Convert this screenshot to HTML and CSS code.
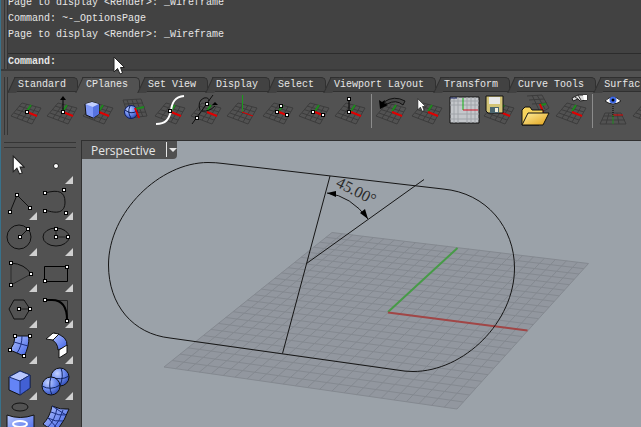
FILE: index.html
```
<!DOCTYPE html>
<html lang="en">
<head>
  <meta charset="UTF-8" />
  <title>Perspective</title>
  <link rel="stylesheet" href="styles.css">
</head>
<body>

<!-- shared icon parts -->
<svg class="defs" aria-hidden="true">
  <defs>
    <linearGradient id="blue" x1="0" y1="0" x2="1" y2="1">
      <stop offset="0" stop-color="#b9c8ff"/><stop offset="1" stop-color="#3c5fe6"/>
    </linearGradient>
    <radialGradient id="ball" cx="0.35" cy="0.3" r="0.8">
      <stop offset="0" stop-color="#c4d2ff"/><stop offset="0.5" stop-color="#6e8cf0"/><stop offset="1" stop-color="#2440a8"/>
    </radialGradient>
    <linearGradient id="gold" x1="0" y1="0" x2="1" y2="1">
      <stop offset="0" stop-color="#fff0a0"/><stop offset="1" stop-color="#e0a018"/>
    </linearGradient>
    <symbol id="mesh" viewBox="0 0 36 40">
      <path d="M13 11L32 16L23 32L2 24Z M10 14L30 20 M7 17.500L28 24 M5 21L25 28 M18 12L8 26 M23 13.500L13 28 M27 15L18 30" fill="none" stroke="#3c3c3c"/>
    </symbol>
    <symbol id="plane" viewBox="0 0 36 40">
      <use href="#mesh" width="36" height="40"/>
      <path d="M18 19L22 13" stroke="#1c8a1c" stroke-width="2"/>
      <path d="M18 20L28 24" stroke="#e00000" stroke-width="2"/>
    </symbol>
    <symbol id="dot" viewBox="0 0 4 4">
      <path d="M0 0h4v4h-4z" fill="#000"/><path d="M1 1h2v2h-2z" fill="#fff"/>
    </symbol>
    <symbol id="arrow" viewBox="0 0 12 19">
      <path d="M1 1V16L4.500 12.500L7 18L9.500 17L7.500 11.500H11.500Z" fill="#fff" stroke="#222"/>
    </symbol>
  </defs>
</svg>

<div class="app">
  <header class="top">
    <div class="grip"></div>
    <div class="console">
      <div class="history">
        <p>Page to display &lt;Render&gt;: _Wireframe</p>
        <p>Command: ~-_OptionsPage</p>
        <p>Page to display &lt;Render&gt;: _Wireframe</p>
      </div>
      <div class="prompt">
        <label for="command">Command:</label>
        <input id="command" type="text" autocomplete="off">
      </div>
    </div>
    <svg class="pointer" viewBox="0 0 12 19"><use href="#arrow"/></svg>
  </header>

  <section class="toolbar">
    <div class="grip"></div>
    <div class="toolbar-main">
      <nav class="tabs">
        <button class="tab">Standard</button>
        <button class="tab active">CPlanes</button>
        <button class="tab">Set View</button>
        <button class="tab">Display</button>
        <button class="tab">Select</button>
        <button class="tab">Viewport Layout</button>
        <button class="tab">Transform</button>
        <button class="tab">Curve Tools</button>
        <button class="tab">Surfac</button>
      </nav>
      <div class="icons">
        <button class="tool" aria-label="Set CPlane origin"><svg viewBox="0 0 36 40">
          <use href="#plane"/><use href="#dot" x="16" y="18" width="4" height="4"/></svg></button>
        <button class="tool" aria-label="Set CPlane elevation"><svg viewBox="0 0 36 40">
          <use href="#plane"/><path d="M18 20V6" stroke="#000"/><path d="M15 8L18 4L21 8Z"/><use href="#dot" x="16" y="18" width="4" height="4"/></svg></button>
        <button class="tool" aria-label="Set CPlane to object"><svg viewBox="0 0 36 40">
          <use href="#plane"/><path d="M4 12L11 10L18 12V22L12 26L5 23Z" fill="#7e98f8" stroke="#111"/><path d="M4 12L11 10L18 12L12 15Z" fill="#c3d0ff"/><path d="M12 15L18 12V22L12 26Z" fill="#5673e2"/></svg></button>
        <button class="tool" aria-label="Set CPlane to surface"><svg viewBox="0 0 36 40">
          <path d="M6 8L24 7L30 24L12 26Z M8 12L26 11 M9 17L28 15 M11 21L29 20 M10 8L17 26 M15 8L21 25 M19 7L26 25" fill="none" stroke="#3c3c3c"/>
          <circle cx="14" cy="20" r="6.500" fill="url(#ball)" stroke="#0c1c60"/><path d="M8 18Q14 23 20 19M13 14Q10 20 14 26" fill="none" stroke="#10235f"/>
          <path d="M18 17L27 15" stroke="#1c8a1c" stroke-width="2"/><path d="M18 16L22 26" stroke="#e00000" stroke-width="2"/></svg></button>
        <button class="tool" aria-label="Set CPlane perpendicular to curve"><svg viewBox="0 0 36 40">
          <use href="#plane"/><path d="M3 32C13 32 16 27 18 19C19 10 22 5 31 4" fill="none" stroke="#fff" stroke-width="2"/><use href="#dot" x="15" y="17" width="4" height="4"/></svg></button>
        <button class="tool" aria-label="Rotate CPlane"><svg viewBox="0 0 36 40">
          <use href="#plane"/><path d="M3 32L24 3M11 18Q8 9 15 6Q20 5 20 9M13 19Q20 20 26 14" fill="none" stroke="#111"/><path d="M23 13L26 10L29 13Z"/>
          <use href="#dot" x="6" y="24" width="4" height="4"/><use href="#dot" x="16" y="10" width="4" height="4"/></svg></button>
        <button class="tool" aria-label="Set CPlane vertical"><svg viewBox="0 0 36 40">
          <use href="#mesh"/><path d="M17.500 20V3" stroke="#1c9a1c"/><path d="M17 20L28 24" stroke="#e00000"/></svg></button>
        <button class="tool" aria-label="Set CPlane by 3 points"><svg viewBox="0 0 36 40">
          <use href="#plane"/><use href="#dot" x="14" y="18" width="4" height="4"/><use href="#dot" x="18" y="12" width="4" height="4"/><use href="#dot" x="24" y="21" width="4" height="4"/></svg></button>
        <button class="tool" aria-label="Set CPlane by X axis"><svg viewBox="0 0 36 40">
          <use href="#plane"/><use href="#dot" x="14" y="18" width="4" height="4"/><use href="#dot" x="24" y="21" width="4" height="4"/></svg></button>
        <button class="tool" aria-label="Set CPlane by Z axis"><svg viewBox="0 0 36 40">
          <use href="#plane"/><path d="M16 20V7" stroke="#000"/><use href="#dot" x="14" y="18" width="4" height="4"/><use href="#dot" x="14" y="5" width="4" height="4"/></svg></button>
        <span class="separator"></span>
        <button class="tool" aria-label="Previous CPlane"><svg viewBox="0 0 36 40">
          <use href="#plane"/><path d="M10 10Q20 3 31 9L29 13Q22 7 13 12Z" fill="#484848" stroke="#111"/><path d="M5 8L6 17L14 13L10 11L11 8L8 10Z"/></svg></button>
        <button class="tool" aria-label="Select CPlane"><svg viewBox="0 0 36 40">
          <use href="#plane"/><use href="#arrow" x="7" y="6" width="9" height="14"/></svg></button>
        <button class="tool" aria-label="CPlane grid"><svg viewBox="0 0 36 40">
          <path d="M4 5H33V31H4Z" fill="#c4c7cb" stroke="#111"/><path d="M8 5V31M12 5V31M21 5V31M25 5V31M29 5V31M4 9H33M4 13H33M4 22H33M4 27H33" stroke="#a0a4a9"/><path d="M17 6V18" stroke="#10b010"/><path d="M17 18H32" stroke="#d01020"/><path d="M4 6H11" stroke="#142060"/></svg></button>
        <button class="tool" aria-label="Save CPlane"><svg viewBox="0 0 36 40">
          <use href="#plane"/><path d="M4 4H21V21H6L4 19Z" fill="#d3c477" stroke="#111"/><path d="M7 5H18V12H7Z" fill="#e8e8e8"/><path d="M8 15H17V21H8Z" fill="#4b6670"/><path d="M13 16H16V20H13Z" fill="#f1efe0"/></svg></button>
        <button class="tool" aria-label="Read CPlane"><svg viewBox="0 0 36 40">
          <path d="M9 4L24 3L31 16L19 23M11 8L26 7M14 12L29 11M14 3L21 18M19 3L27 17" fill="none" stroke="#3c3c3c"/><path d="M22 13L28 12" stroke="#1c8a1c" stroke-width="2"/><path d="M22 12L25 20" stroke="#e00000" stroke-width="2"/>
          <path d="M4 33V18L7 15H12L14 18H25V23L21 33Z" fill="#f7d45c" stroke="#111"/><path d="M4 33L10 21H31L25 33Z" fill="url(#gold)" stroke="#111"/></svg></button>
        <button class="tool" aria-label="Edit CPlane"><svg viewBox="0 0 36 40">
          <use href="#plane"/><path d="M18 6L24 3H33V8L26 9L24 7L19 9Z" fill="#d8d8d8" stroke="#222"/><path d="M24 3L27 8M21 5L24 7" stroke="#333"/><path d="M29 3H33V8H30Z" fill="#fff"/></svg></button>
        <span class="separator"></span>
        <button class="tool" aria-label="Plan view"><svg viewBox="0 0 36 40">
          <path d="M10 21H26L31 32H5ZM9 24H28M7 28H30M14 21L11 32M22 21L24 32" fill="none" stroke="#3c3c3c"/>
          <path d="M10 9Q18 1 26 9Q18 15 10 9Z" fill="#fff" stroke="#222"/><circle cx="18" cy="8" r="3.500" fill="#3e69e5"/><circle cx="18" cy="8" r="1.500"/>
          <path d="M18 14V25" stroke="#000" stroke-dasharray="1 1"/><path d="M18 23H28" stroke="#e00000"/><path d="M18 23V32" stroke="#1c8a1c"/></svg></button>
        <button class="tool" aria-label="Synchronize CPlanes"><svg viewBox="0 0 36 40"><use href="#plane"/></svg></button>
      </div>
    </div>
  </section>

  <main class="work">
    <aside class="sidebar">
      <div class="palette">
        <button class="tool" aria-label="Select"><svg viewBox="0 0 36 36"><use href="#arrow" x="11" y="7" width="13" height="20"/></svg></button>
        <button class="tool more" aria-label="Point"><svg viewBox="0 0 36 36"><circle cx="19" cy="18" r="2.500" fill="#fff" stroke="#222"/></svg></button>
        <button class="tool more" aria-label="Polyline"><svg viewBox="0 0 36 36">
          <path d="M9 28L16 11L29 24" fill="none" stroke="#111"/><use href="#dot" x="7" y="26" width="4" height="4"/><use href="#dot" x="14" y="9" width="4" height="4"/><use href="#dot" x="27" y="22" width="4" height="4"/></svg></button>
        <button class="tool more" aria-label="Curve"><svg viewBox="0 0 36 36">
          <path d="M8 9C22 5 28 8 28 18C28 29 20 30 8 26" fill="none" stroke="#111"/><use href="#dot" x="6" y="7" width="4" height="4"/><use href="#dot" x="25" y="4" width="4" height="4"/><use href="#dot" x="6" y="25" width="4" height="4"/><use href="#dot" x="27" y="27" width="4" height="4"/></svg></button>
        <button class="tool more" aria-label="Circle"><svg viewBox="0 0 36 36">
          <circle cx="18" cy="17" r="12" fill="none" stroke="#111"/><path d="M19 17L27 9" stroke="#111"/><use href="#dot" x="17" y="15" width="4" height="4"/><use href="#dot" x="25" y="7" width="4" height="4"/></svg></button>
        <button class="tool more" aria-label="Ellipse"><svg viewBox="0 0 36 36">
          <ellipse cx="19" cy="17" rx="13" ry="9" fill="none" stroke="#111"/><path d="M19 9V17H31" fill="none" stroke="#222"/><use href="#dot" x="17" y="15" width="4" height="4"/><use href="#dot" x="17" y="7" width="4" height="4"/><use href="#dot" x="29" y="15" width="4" height="4"/></svg></button>
        <button class="tool more" aria-label="Arc"><svg viewBox="0 0 36 36">
          <path d="M10 7Q24 8 30 18" fill="none" stroke="#111"/><path d="M10 7V29L30 18" fill="none" stroke="#2c2c2c"/><use href="#dot" x="8" y="5" width="4" height="4"/><use href="#dot" x="8" y="27" width="4" height="4"/><use href="#dot" x="28" y="16" width="4" height="4"/></svg></button>
        <button class="tool more" aria-label="Rectangle"><svg viewBox="0 0 36 36">
          <path d="M7.500 10.500H30.500V25.500H7.500Z" fill="none" stroke="#000"/><use href="#dot" x="28" y="9" width="4" height="4"/><use href="#dot" x="6" y="23" width="4" height="4"/></svg></button>
        <button class="tool more" aria-label="Polygon"><svg viewBox="0 0 36 36">
          <path d="M13 8H23L29 17L23 27H13L8 17Z" fill="none" stroke="#111"/><path d="M18 17H28" stroke="#222"/><use href="#dot" x="16" y="15" width="4" height="4"/><use href="#dot" x="27" y="15" width="4" height="4"/></svg></button>
        <button class="tool more" aria-label="Fillet"><svg viewBox="0 0 36 36">
          <path d="M8 8.500H30.500V28" fill="none" stroke="#222"/><path d="M8 8H15Q30 8 30 28" fill="none" stroke="#000" stroke-width="2"/><use href="#dot" x="6" y="6" width="4" height="4"/><use href="#dot" x="28" y="27" width="4" height="4"/></svg></button>
        <button class="tool more" aria-label="Surface from points"><svg viewBox="0 0 36 36">
          <path d="M14 8L28 8Q28 20 23 28L9 22Q14 16 14 8Z" fill="url(#blue)" stroke="#111"/><path d="M21 8Q21 18 16 25M13 14L27 18" fill="none" stroke="#1b2f80"/><use href="#dot" x="12" y="6" width="4" height="4"/><use href="#dot" x="27" y="6" width="4" height="4"/><use href="#dot" x="7" y="20" width="4" height="4"/><use href="#dot" x="21" y="26" width="4" height="4"/></svg></button>
        <button class="tool more" aria-label="Blend surface"><svg viewBox="0 0 36 36">
          <path d="M17 5Q31 8 30 18L21 22Q21 15 14 11Z" fill="url(#blue)" stroke="#111"/><path d="M9 11L16 5L22 6L16 12Z" fill="#fff" stroke="#111"/><path d="M22 22L30 17V25L22 30Z" fill="#fff" stroke="#111"/></svg></button>
        <button class="tool more" aria-label="Box"><svg viewBox="0 0 36 36">
          <path d="M8 13L19 7L29 11V24L19 31L8 26Z" fill="#6484f6" stroke="#111"/><path d="M8 13L19 7L29 11L19 17Z" fill="#b7c6ff" stroke="#1b2f70"/><path d="M19 17L29 11V24L19 31Z" fill="#4260d4" stroke="#1b2f70"/></svg></button>
        <button class="tool more" aria-label="Boolean union"><svg viewBox="0 0 36 36">
          <circle cx="23" cy="13" r="9" fill="url(#ball)" stroke="#111"/><path d="M14 13Q24 17 32 12M24 4Q27 12 23 22" fill="none" stroke="#10235f"/><circle cx="14" cy="22" r="9" fill="url(#ball)" stroke="#111"/><path d="M5 22Q14 27 23 21M14 13Q11 22 15 31" fill="none" stroke="#10235f"/></svg></button>
        <button class="tool" aria-label="Project curves"><svg viewBox="0 0 36 36">
          <ellipse cx="19" cy="7" rx="8" ry="4" fill="none" stroke="#111"/><path d="M6 15Q19 20 33 15V36H6Z" fill="url(#blue)" stroke="#111"/><ellipse cx="19" cy="24" rx="7" ry="3" fill="none" stroke="#fff" stroke-width="2"/></svg></button>
        <button class="tool" aria-label="Surface edit"><svg viewBox="0 0 36 36">
          <path d="M15 6Q23 10 32 9Q28 20 21 29Q13 30 6 24Q13 17 15 6Z" fill="url(#blue)" stroke="#111"/><path d="M20 8Q18 20 11 27M26 10Q23 21 16 29M14 12Q22 16 29 15M11 18Q18 22 26 21M15 6L29 15M11 18L21 29" fill="none" stroke="#1b2f80"/></svg></button>
      </div>
    </aside>

    <section class="viewport">
      <svg class="scene" viewBox="82 141 559 286" preserveAspectRatio="xMinYMin slice">
        <path class="floor" d="M332 232.500L588.500 263.500L457 409L164 367Z"/>
        <path class="grid" id="grid"/>
        <path class="axis-y" d="M388 312L457.500 248"/>
        <path class="axis-x" d="M388 312.500L527.500 330.500"/>
        <g class="curve">
          <path d="M443 189L223 163.500Q216 162.500 208 162.500C160 162.500 108.500 212 108.500 265C108.500 305 133 334 170 338L397 370Q405 371.500 413 371.500C464 371.500 514.500 322 514.500 268C514.500 228 487 193 443 189Z"/>
          <path d="M330 176L282.500 353.500M424 179.500L306.500 263.500"/>
          <path d="M327 193Q351 196 368 219"/>
        </g>
        <path class="arrowhead" d="M327 193L336 191V197ZM368 219L360 213L365 209Z"/>
        <text class="angle" transform="translate(335 186) rotate(27)">45.00°</text>
      </svg>
      <div class="viewport-title">
        <button class="view-name">Perspective</button>
        <button class="view-menu" aria-label="Viewport menu"></button>
      </div>
    </section>
  </main>
</div>

<script src="grid.js"></script>
</body>
</html>
```

FILE: grid.js
```
// construction plane corners: back, right, front, left
const corners = [[332, 232.5], [588.5, 263.5], [457, 409], [164, 367]];
const cells = 24;

// maps the unit square onto the corners with perspective
function project(u, v) {
  const [[x0, y0], [x1, y1], [x2, y2], [x3, y3]] = corners;
  const dx1 = x1 - x2, dx2 = x3 - x2, sx = x0 - x1 + x2 - x3;
  const dy1 = y1 - y2, dy2 = y3 - y2, sy = y0 - y1 + y2 - y3;
  const det = dx1 * dy2 - dx2 * dy1;
  const g = (sx * dy2 - dx2 * sy) / det;
  const h = (dx1 * sy - sx * dy1) / det;
  const w = g * u + h * v + 1;
  const x = ((x1 - x0 + g * x1) * u + (x3 - x0 + h * x3) * v + x0) / w;
  const y = ((y1 - y0 + g * y1) * u + (y3 - y0 + h * y3) * v + y0) / w;
  return x.toFixed(1) + ' ' + y.toFixed(1);
}

let d = '';
for (let i = 0; i <= cells; i++) {
  const t = i / cells;
  d += `M${project(t, 0)}L${project(t, 1)}M${project(0, t)}L${project(1, t)}`;
}
document.getElementById('grid').setAttribute('d', d);
```

FILE: styles.css
```
* {
  box-sizing: border-box;
}
body {
  margin: 0;
  background: #525252;
  color: #e6e6e6;
  font-family: "Liberation Mono", monospace;
  font-size: 10px;
}
button {
  padding: 0;
  border: 0;
  background: none;
  color: inherit;
  font: inherit;
  white-space: nowrap;
}
.defs {
  position: absolute;
  width: 0;
  height: 0;
}
.app {
  display: flex;
  flex-direction: column;
  height: 100vh;
  overflow: hidden;
  border-left: 1px solid #38718a;
}
.grip {
  flex: none;
  width: 4px;
  margin: 0 0 0 3px;
  border: solid #353535;
  border-width: 0 1px;
}

/* command line */
.top {
  display: flex;
  position: relative;
  flex: none;
  border-bottom: 2px solid #3a3a3a;
}
.console {
  flex: 1;
  background: #424242;
}
.history {
  display: flex;
  flex-direction: column;
  justify-content: flex-end;
  height: 53px;
  padding-bottom: 10px;
  overflow: hidden;
}
.history p {
  flex: none;
  margin: 0;
  line-height: 16px;
}
.prompt {
  display: flex;
  align-items: center;
  height: 16px;
  border-top: 1px solid #2c2c2c;
  font-weight: bold;
}
.prompt input {
  flex: 1;
  min-width: 0;
  height: 14px;
  padding: 0 4px;
  border: 0;
  outline: 0;
  background: none;
  color: inherit;
  font: inherit;
}
.pointer {
  position: absolute;
  left: 112px;
  top: 56px;
  z-index: 2;
  width: 12px;
  height: 19px;
}

/* toolbar */
.toolbar {
  display: flex;
  flex: none;
  padding-top: 6px;
}
.toolbar .grip {
  height: 58px;
}
.toolbar-main {
  flex: 1;
  min-width: 0;
  overflow: hidden;
}
.tabs {
  display: flex;
}
.tab {
  position: relative;
  flex: none;
  height: 15px;
  padding: 0 10px;
  line-height: 15px;
  border-bottom: 1px solid #303030;
  z-index: 0;
}
.tab::before {
  content: "";
  position: absolute;
  inset: 0 -2px 0 6px;
  z-index: -1;
  border: 1px solid #303030;
  border-width: 1px 1px 0 0;
  border-radius: 0 5px 0 0;
  background: #424242;
}
.tab::after {
  content: "";
  position: absolute;
  left: 3px;
  top: 0;
  z-index: -1;
  width: 8px;
  height: 15px;
  border: 1px solid #303030;
  border-width: 1px 0 0 1px;
  background: #424242;
  transform: skewX(-25deg);
}
.tab.active {
  border-bottom-color: #525252;
}
.tab.active::before,
.tab.active::after {
  background: #525252;
}
.icons {
  display: flex;
  padding-left: 1px;
}
.tool {
  position: relative;
  flex: none;
  width: 36px;
}
.tool svg {
  display: block;
  width: 100%;
}
.separator {
  flex: none;
  width: 1px;
  height: 34px;
  margin: 2px 2px 0;
  background: #8c8c8c;
}

/* side palette */
.work {
  display: flex;
  flex: 1;
  min-height: 0;
  margin-top: 5px;
}
.sidebar {
  flex: none;
  width: 80px;
  padding: 2px 5px 0 0;
}
.sidebar::before {
  content: "";
  display: block;
  height: 4px;
  margin-left: 3px;
  border: solid #353535;
  border-width: 1px 0;
}
.palette {
  display: grid;
  grid-template-columns: 36px 36px;
}
.more::after {
  content: "";
  position: absolute;
  right: 0;
  bottom: 0;
  width: 8px;
  height: 8px;
  background: #cfcfcf;
  clip-path: polygon(100% 0, 100% 100%, 0 100%);
}

/* viewport */
.viewport {
  position: relative;
  flex: 1;
  min-width: 0;
  border: solid #303030;
  border-width: 1px 0 0 1px;
  background: #9ba2a9;
}
.scene {
  display: block;
  width: 100%;
  height: 100%;
}
.floor {
  fill: #92979f;
}
.grid {
  fill: none;
  stroke: #848990;
}
.axis-x {
  stroke: #a14646;
  stroke-width: 2;
}
.axis-y {
  stroke: #479b47;
  stroke-width: 2;
}
.curve {
  fill: none;
  stroke: #161616;
}
.arrowhead {
  fill: #000;
}
.angle {
  fill: #2c2c2c;
  font-family: "Liberation Serif", serif;
  font-size: 16px;
}
.viewport-title {
  display: flex;
  position: absolute;
  left: 0;
  top: 0;
  height: 18px;
  padding-left: 9px;
  border-radius: 0 0 4px 0;
  background: #505050;
  font-family: "Open Sans", sans-serif;
  font-size: 12px;
}
.view-name {
  padding-right: 11px;
  line-height: 17px;
}
.view-menu {
  width: 11px;
  height: 15px;
  margin-top: 1px;
  border-left: 1px solid #e6e6e6;
}
.view-menu::before {
  content: "";
  display: block;
  margin-left: 2px;
  border: 4px solid transparent;
  border-top-color: #e6e6e6;
  border-bottom: 0;
}
```
